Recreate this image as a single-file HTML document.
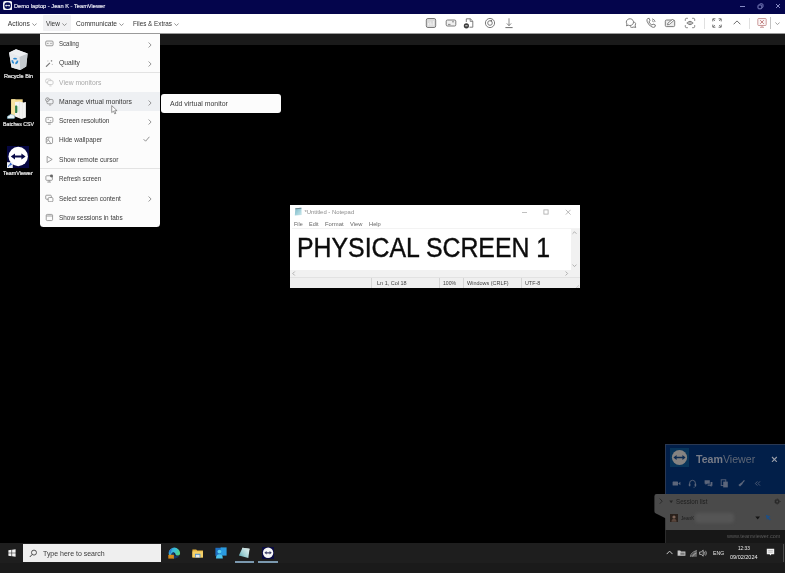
<!DOCTYPE html>
<html>
<head>
<meta charset="utf-8">
<title>TeamViewer</title>
<style>
*{box-sizing:border-box;margin:0;padding:0}
html,body{width:785px;height:573px;overflow:hidden;background:#000;font-family:"Liberation Sans",sans-serif;}
#root{position:absolute;left:-5px;top:-5px;width:795px;height:583px;overflow:hidden;background:#000;filter:blur(0.5px)}
#in{position:absolute;left:5px;top:5px;width:785px;height:573px}
.a{position:absolute;display:block}
.t{position:absolute;white-space:pre;transform-origin:0 50%;display:block}
</style>
</head>
<body>
<div id="root"><div id="in">
<div class="a" style="left:-5px;top:-5px;width:795px;height:19px;background:#04054c;"></div>
<div class="a" style="left:-5px;top:14px;width:795px;height:19.2px;background:#ffffff;"></div>
<div class="a" style="left:-5px;top:32.8px;width:795px;height:0.9px;background:#9a9a9a;"></div>
<div class="a" style="left:-5px;top:33.6px;width:795px;height:11.3px;background:#1a1a1a;"></div>
<svg class="a" style="left:2.7px;top:1.1px;" width="9.3" height="9.3" viewBox="0 0 9.3 9.3"><rect x="0" y="0" width="9.3" height="9.3" rx="2.2" fill="#f4f4f8"/><circle cx="4.65" cy="4.65" r="3.3" fill="#0a0f5a"/><path d="M2 4.65 L3.5 3.5 V4.25 H5.8 V3.5 L7.3 4.65 L5.8 5.8 V5.05 H3.5 V5.8Z" fill="#fff"/></svg>
<div class="t" style="left:14px;top:2.98px;height:6.84px;line-height:6.84px;font-size:5.7px;color:#ececf6;font-weight:400;-webkit-text-stroke:0.15px #ececf6;">Demo laptop - Jean K - TeamViewer</div>
<div class="a" style="left:740.4px;top:5.6px;width:4.6px;height:1px;background:#8589c4;"></div>
<svg class="a" style="left:756px;top:2px;" width="9" height="9" viewBox="0 0 9 9"><rect x="2" y="3" width="3.8" height="3.8" rx="0.8" fill="none" stroke="#7f83c0" stroke-width="1"/><path d="M3.4 2.4 Q3.6 1.8 4.4 1.8 H6 Q7 1.8 7 2.8 V4.6 Q7 5.4 6.2 5.6" fill="none" stroke="#7f83c0" stroke-width="0.9"/></svg>
<svg class="a" style="left:774.3px;top:2.2px;" width="8" height="8" viewBox="0 0 8 8"><path d="M2 2 L6 6 M6 2 L2 6" stroke="#9497d0" stroke-width="0.9" fill="none"/></svg>
<div class="a" style="left:42.8px;top:14.5px;width:27.8px;height:16.8px;background:#f1f1f3;border-radius:1px"></div>
<div class="t" style="left:7.8px;top:19.98px;height:8.04px;line-height:8.04px;font-size:6.7px;color:#333;font-weight:400;">Actions</div>
<svg class="a" style="left:31.700000000000003px;top:22.5px;" width="5" height="3.4" viewBox="0 0 5 3.4"><path d="M0.4 0.5 L2.5 2.6 L4.6 0.5" fill="none" stroke="#777" stroke-width="0.8"/></svg>
<div class="t" style="left:46.2px;top:19.98px;height:8.04px;line-height:8.04px;font-size:6.7px;color:#333;font-weight:400;transform:scaleX(0.9600);">View</div>
<svg class="a" style="left:62.0px;top:22.5px;" width="5" height="3.4" viewBox="0 0 5 3.4"><path d="M0.4 0.5 L2.5 2.6 L4.6 0.5" fill="none" stroke="#777" stroke-width="0.8"/></svg>
<div class="t" style="left:75.8px;top:19.98px;height:8.04px;line-height:8.04px;font-size:6.7px;color:#333;font-weight:400;transform:scaleX(0.9936);">Communicate</div>
<svg class="a" style="left:118.7px;top:22.5px;" width="5" height="3.4" viewBox="0 0 5 3.4"><path d="M0.4 0.5 L2.5 2.6 L4.6 0.5" fill="none" stroke="#777" stroke-width="0.8"/></svg>
<div class="t" style="left:133px;top:19.98px;height:8.04px;line-height:8.04px;font-size:6.7px;color:#333;font-weight:400;transform:scaleX(0.9455);">Files &amp; Extras</div>
<svg class="a" style="left:174.0px;top:22.5px;" width="5" height="3.4" viewBox="0 0 5 3.4"><path d="M0.4 0.5 L2.5 2.6 L4.6 0.5" fill="none" stroke="#777" stroke-width="0.8"/></svg>
<svg class="a" style="left:425.0px;top:17.0px;" width="12" height="12" viewBox="0 0 12 12"><rect x="1.3" y="1.5" width="9.4" height="9" rx="1.6" fill="#dadada" stroke="#6e6e6e" stroke-width="0.9"/><path d="M3.5 8.5V6 M5.2 8.5V4.5 M6.9 8.5V6.5 M8.6 8.5V4" stroke="#f4f4f4" stroke-width="0.8"/></svg>
<svg class="a" style="left:444.8px;top:17.0px;" width="12" height="12" viewBox="0 0 12 12"><rect x="1.2" y="3" width="9.6" height="6" rx="1.2" fill="#f0f0f0" stroke="#6e6e6e" stroke-width="0.9"/><path d="M3 7.4H5.5 M7 4.8H9" stroke="#6e6e6e" stroke-width="0.8"/></svg>
<svg class="a" style="left:463.3px;top:17.0px;" width="12" height="12" viewBox="0 0 12 12"><path d="M3.3 5V1.8H7.4L9.8 4.2V10.2H6.5" fill="none" stroke="#6e6e6e" stroke-width="0.9"/><path d="M7.2 1.8V4.4H9.8" fill="none" stroke="#6e6e6e" stroke-width="0.8"/><circle cx="3.4" cy="8.8" r="2.6" fill="#3c3c3c"/><rect x="2.2" y="8.3" width="2.4" height="1" fill="#ddd"/></svg>
<svg class="a" style="left:484.0px;top:17.0px;" width="12" height="12" viewBox="0 0 12 12"><circle cx="6" cy="6" r="4.6" fill="none" stroke="#6e6e6e" stroke-width="0.9"/><circle cx="6" cy="6" r="2.3" fill="none" stroke="#6e6e6e" stroke-width="0.9"/><path d="M6 3.7L8.2 2.6L7.9 4.8Z" fill="#6e6e6e"/></svg>
<svg class="a" style="left:503.4px;top:17.0px;" width="12" height="12" viewBox="0 0 12 12"><path d="M6 1.3V8.6 M3.8 6.4L6 8.7L8.2 6.4" fill="none" stroke="#6e6e6e" stroke-width="0.8"/><path d="M2.4 10.6H9.6" stroke="#6e6e6e" stroke-width="1"/></svg>
<svg class="a" style="left:624.5px;top:17.0px;" width="12" height="12" viewBox="0 0 12 12"><path d="M1.3 5.2a3.6 3.4 0 1 1 2 3L1.4 8.8L2 7A3.4 3.4 0 0 1 1.3 5.2Z" fill="none" stroke="#6e6e6e" stroke-width="0.9"/><path d="M9 4.6a3.2 3.2 0 0 1 1.2 4.2L10.7 10.5L8.9 10A3.4 3.4 0 0 1 5 9.6" fill="none" stroke="#6e6e6e" stroke-width="0.9"/></svg>
<svg class="a" style="left:644.5px;top:17.0px;" width="12" height="12" viewBox="0 0 12 12"><path d="M2.6 1.6L4.2 1.3L5.1 3.8L3.9 4.7Q4.8 7 7 8.2L8 7L10.4 8L10 9.8Q8.8 10.8 7 10Q3.2 8.2 2 4.2Q1.7 2.4 2.6 1.6Z" fill="none" stroke="#6e6e6e" stroke-width="0.9"/><path d="M7 1.8Q9.6 2.2 10.2 5 M7 3.6Q8.2 4 8.5 5.2" fill="none" stroke="#6e6e6e" stroke-width="0.8"/></svg>
<svg class="a" style="left:664.0px;top:17.0px;" width="12" height="12" viewBox="0 0 12 12"><rect x="1.3" y="3" width="9.4" height="6.6" rx="1.2" fill="#ececec" stroke="#6e6e6e" stroke-width="0.9"/><path d="M3.3 7.8L4 6L8.6 2.4L9.8 3.6L5.4 7.4Z" fill="#fff" stroke="#6e6e6e" stroke-width="0.8"/></svg>
<svg class="a" style="left:683.5px;top:17.0px;" width="12" height="12" viewBox="0 0 12 12"><path d="M1.3 3.8V2.6Q1.3 1.3 2.6 1.3H3.8 M8.2 1.3H9.4Q10.7 1.3 10.7 2.6V3.8 M10.7 8.2V9.4Q10.7 10.7 9.4 10.7H8.2 M3.8 10.7H2.6Q1.3 10.7 1.3 9.4V8.2" fill="none" stroke="#6e6e6e" stroke-width="0.9"/><path d="M2.8 6Q6 2.6 9.2 6Q6 9.4 2.8 6Z" fill="none" stroke="#6e6e6e" stroke-width="0.8"/><circle cx="6" cy="6" r="1.3" fill="none" stroke="#6e6e6e" stroke-width="0.8"/></svg>
<div class="a" style="left:704.2px;top:17.5px;width:0.8px;height:11px;background:#e0e0e0;"></div>
<svg class="a" style="left:711.0px;top:17.0px;" width="12" height="12" viewBox="0 0 12 12"><path d="M1.8 4.4V1.8H4.4 M7.6 1.8H10.2V4.4 M10.2 7.6V10.2H7.6 M4.4 10.2H1.8V7.6" fill="none" stroke="#6e6e6e" stroke-width="1"/><path d="M2 2L4 4 M10 2L8 4 M10 10L8 8 M2 10L4 8" stroke="#6e6e6e" stroke-width="0.8"/></svg>
<svg class="a" style="left:732.5px;top:20.2px;" width="8" height="5" viewBox="0 0 8 5"><path d="M0.6 4.3L4 0.9L7.4 4.3" fill="none" stroke="#6e6e6e" stroke-width="1"/></svg>
<div class="a" style="left:748.8px;top:17.5px;width:0.8px;height:11px;background:#e0e0e0;"></div>
<svg class="a" style="left:756.0px;top:16.8px;" width="12" height="12" viewBox="0 0 12 12"><rect x="1.8" y="1.5" width="8.4" height="7" rx="0.8" fill="#fbf4f4" stroke="#bf8585" stroke-width="0.8"/><path d="M4.2 3.2L7.8 6.8 M7.8 3.2L4.2 6.8" stroke="#a55" stroke-width="0.7"/><path d="M6 8.5V10 M4 10.3H8" stroke="#bf8585" stroke-width="0.8"/></svg>
<div class="a" style="left:769.9px;top:17px;width:0.8px;height:11.6px;background:#c4c4c4;"></div>
<svg class="a" style="left:774.8px;top:22.1px;" width="5" height="3.4" viewBox="0 0 5 3.4"><path d="M0.4 0.5 L2.5 2.6 L4.6 0.5" fill="none" stroke="#888" stroke-width="0.8"/></svg>
<div class="a" style="left:39.6px;top:33.6px;width:120.6px;height:193.5px;background:#fcfcfc;border-radius:0 0 3.5px 3.5px"></div>
<div class="a" style="left:39.6px;top:92.3px;width:120.6px;height:19px;background:#eef0f3;"></div>
<div class="a" style="left:39.6px;top:72.0px;width:120.6px;height:0.8px;background:#e3e3e3;"></div>
<div class="a" style="left:39.6px;top:168.2px;width:120.6px;height:0.8px;background:#e3e3e3;"></div>
<div class="t" style="left:59px;top:39.89px;height:8.22px;line-height:8.22px;font-size:6.85px;color:#3a3a3a;font-weight:400;transform:scaleX(0.8907);">Scaling</div>
<div class="t" style="left:59px;top:59.29px;height:8.22px;line-height:8.22px;font-size:6.85px;color:#3a3a3a;font-weight:400;transform:scaleX(0.9806);">Quality</div>
<div class="t" style="left:59px;top:79.29px;height:8.22px;line-height:8.22px;font-size:6.85px;color:#a9a9a9;font-weight:400;transform:scaleX(0.9869);">View monitors</div>
<div class="t" style="left:59px;top:97.99px;height:8.22px;line-height:8.22px;font-size:6.85px;color:#3a3a3a;font-weight:400;">Manage virtual monitors</div>
<div class="t" style="left:59px;top:116.89px;height:8.22px;line-height:8.22px;font-size:6.85px;color:#3a3a3a;font-weight:400;transform:scaleX(0.9462);">Screen resolution</div>
<div class="t" style="left:59px;top:136.29px;height:8.22px;line-height:8.22px;font-size:6.85px;color:#3a3a3a;font-weight:400;transform:scaleX(0.9562);">Hide wallpaper</div>
<div class="t" style="left:59px;top:155.99px;height:8.22px;line-height:8.22px;font-size:6.85px;color:#3a3a3a;font-weight:400;transform:scaleX(0.9698);">Show remote cursor</div>
<div class="t" style="left:59px;top:174.79px;height:8.22px;line-height:8.22px;font-size:6.85px;color:#3a3a3a;font-weight:400;transform:scaleX(0.9094);">Refresh screen</div>
<div class="t" style="left:59px;top:194.69px;height:8.22px;line-height:8.22px;font-size:6.85px;color:#3a3a3a;font-weight:400;transform:scaleX(0.9388);">Select screen content</div>
<div class="t" style="left:59px;top:213.59px;height:8.22px;line-height:8.22px;font-size:6.85px;color:#3a3a3a;font-weight:400;transform:scaleX(0.9392);">Show sessions in tabs</div>
<svg class="a" style="left:148.2px;top:41.699999999999996px;" width="4" height="6" viewBox="0 0 4 6"><path d="M0.6 0.5 L3.1 3 L0.6 5.5" fill="none" stroke="#8a8a8a" stroke-width="0.9"/></svg>
<svg class="a" style="left:148.2px;top:60.8px;" width="4" height="6" viewBox="0 0 4 6"><path d="M0.6 0.5 L3.1 3 L0.6 5.5" fill="none" stroke="#8a8a8a" stroke-width="0.9"/></svg>
<svg class="a" style="left:148.2px;top:99.60000000000001px;" width="4" height="6" viewBox="0 0 4 6"><path d="M0.6 0.5 L3.1 3 L0.6 5.5" fill="none" stroke="#8a8a8a" stroke-width="0.9"/></svg>
<svg class="a" style="left:148.2px;top:118.7px;" width="4" height="6" viewBox="0 0 4 6"><path d="M0.6 0.5 L3.1 3 L0.6 5.5" fill="none" stroke="#8a8a8a" stroke-width="0.9"/></svg>
<svg class="a" style="left:148.2px;top:195.9px;" width="4" height="6" viewBox="0 0 4 6"><path d="M0.6 0.5 L3.1 3 L0.6 5.5" fill="none" stroke="#8a8a8a" stroke-width="0.9"/></svg>
<svg class="a" style="left:143px;top:136.2px;" width="7" height="6" viewBox="0 0 7 6"><path d="M0.6 3.2 L2.6 5.2 L6.4 0.8" fill="none" stroke="#777" stroke-width="0.8"/></svg>
<svg class="a" style="left:45.1px;top:39.4px;" width="8.8" height="8.8" viewBox="0 0 10 10"><rect x="0.8" y="2.3" width="8.4" height="5.4" rx="1.2" fill="#f2f2f2" stroke="#777" stroke-width="0.8"/><path d="M2.4 5H4 M6 5H7.6" stroke="#777" stroke-width="0.8"/></svg>
<svg class="a" style="left:45.1px;top:58.5px;" width="8.8" height="8.8" viewBox="0 0 10 10"><path d="M1.2 8.8L5.6 4.4" stroke="#777" stroke-width="1.3"/><path d="M7.4 1.2V3 M6.5 2.1H8.3 M3.3 1.8V2.8 M8.3 5.6V6.6" stroke="#777" stroke-width="0.7"/></svg>
<svg class="a" style="left:45.1px;top:78.0px;" width="8.8" height="8.8" viewBox="0 0 10 10"><rect x="0.8" y="1.2" width="6" height="4.4" rx="1.4" fill="none" stroke="#bdbdbd" stroke-width="0.8"/><rect x="3" y="3" width="6.2" height="4.4" rx="1.4" fill="#fcfcfc" stroke="#bdbdbd" stroke-width="0.8"/><path d="M5 9H7.4" stroke="#bdbdbd" stroke-width="0.8"/></svg>
<svg class="a" style="left:45.1px;top:97.3px;" width="8.8" height="8.8" viewBox="0 0 10 10"><rect x="2.2" y="2.8" width="7" height="5" rx="1.4" fill="none" stroke="#777" stroke-width="0.8"/><circle cx="2.8" cy="3" r="2.1" fill="#eef0f3" stroke="#777" stroke-width="0.8"/><path d="M2.8 2V3.2H3.8 M4.6 9.2H7" stroke="#777" stroke-width="0.7" fill="none"/></svg>
<svg class="a" style="left:45.1px;top:116.39999999999999px;" width="8.8" height="8.8" viewBox="0 0 10 10"><rect x="1" y="1.6" width="8" height="5.8" rx="1.4" fill="none" stroke="#777" stroke-width="0.8"/><path d="M3.4 9.2H6.6 M3 3.6H4.4 M5.6 5.4H7" stroke="#777" stroke-width="0.8"/></svg>
<svg class="a" style="left:45.1px;top:135.79999999999998px;" width="8.8" height="8.8" viewBox="0 0 10 10"><rect x="1.4" y="1.4" width="7.2" height="7.2" rx="1.4" fill="none" stroke="#777" stroke-width="0.8"/><path d="M1.6 7L4 4.6L6.6 8.4" fill="none" stroke="#777" stroke-width="0.7"/><circle cx="3" cy="3" r="1.3" fill="#fcfcfc" stroke="#777" stroke-width="0.7"/></svg>
<svg class="a" style="left:45.1px;top:154.9px;" width="8.8" height="8.8" viewBox="0 0 10 10"><path d="M2.4 1.6L8.2 5L2.4 8.6Z" fill="none" stroke="#777" stroke-width="0.8" stroke-linejoin="round"/></svg>
<svg class="a" style="left:45.1px;top:174.2px;" width="8.8" height="8.8" viewBox="0 0 10 10"><rect x="1" y="2" width="7.4" height="5.2" rx="1" fill="none" stroke="#777" stroke-width="0.8"/><path d="M2.6 9.2H6.8 M4.7 7.2V9" stroke="#777" stroke-width="0.8"/><circle cx="7.4" cy="2.4" r="1.7" fill="#666"/></svg>
<svg class="a" style="left:45.1px;top:193.6px;" width="8.8" height="8.8" viewBox="0 0 10 10"><rect x="0.8" y="1.4" width="6.4" height="4.6" rx="1" fill="none" stroke="#777" stroke-width="0.8"/><rect x="3.6" y="4" width="5.4" height="4.8" rx="1.2" fill="#fcfcfc" stroke="#777" stroke-width="0.8"/></svg>
<svg class="a" style="left:45.1px;top:212.9px;" width="8.8" height="8.8" viewBox="0 0 10 10"><rect x="1.4" y="1.6" width="7.2" height="7" rx="1.2" fill="none" stroke="#777" stroke-width="0.8"/><path d="M1.6 3.4H8.4" stroke="#777" stroke-width="0.8"/></svg>
<div class="a" style="left:160.9px;top:94px;width:119.7px;height:18.5px;background:#fcfcfc;border-radius:3px"></div>
<div class="t" style="left:170px;top:99.83px;height:8.34px;line-height:8.34px;font-size:6.95px;color:#3a3a3a;font-weight:400;">Add virtual monitor</div>
<svg class="a" style="left:110.5px;top:105.2px;" width="7.2" height="10.4" viewBox="0 0 7.2 10.4"><path d="M0.7 0.6 V7.6 L2.5 6.1 L3.7 8.9 L4.9 8.4 L3.7 5.7 H6.1 Z" fill="#fdfdfd" stroke="#6e6e6e" stroke-width="0.7" stroke-linejoin="round"/></svg>
<svg class="a" style="left:8px;top:48px;" width="21" height="23" viewBox="0 0 21 23"><path d="M1.1 4.4L8 1.2L19.6 5.4L18.2 18.4L12.3 21.9L3.5 19.4Z" fill="#d9dde0"/><path d="M1.1 4.4L11.6 8.8L12.3 21.9L3.5 19.4Z" fill="#e6e9ec"/><path d="M11.6 8.8L19.6 5.4L18.2 18.4L12.3 21.9Z" fill="#c4c9cd"/><path d="M1.1 4.4L8 1.2L19.6 5.4L11.6 8.8Z" fill="#eef0f2"/><circle cx="6.9" cy="13" r="2.5" fill="none" stroke="#2b8ad2" stroke-width="1.7" stroke-dasharray="3.4 1.6"/></svg>
<div class="t" style="left:3.8px;top:73.38px;height:6.84px;line-height:6.84px;font-size:5.7px;color:#e9e9e9;font-weight:400;transform:scaleX(0.9723);font-weight:400;-webkit-text-stroke:0.22px #e9e9e9;">Recycle Bin</div>
<svg class="a" style="left:6px;top:98px;" width="22" height="22" viewBox="0 0 22 22"><path d="M5.2 1.3H16.7V17.8H5.2Z" fill="#f3d98a"/><path d="M5.2 1.3H9.4V17.8H5.2Z" fill="#f6e2a0"/><path d="M9 4.1L13.5 3.4L17.2 4.6L19.9 4.1V19.6L15.4 20.9L9 18.4Z" fill="#f4f4f2"/><path d="M13.4 3.6V20" stroke="#dcdcd8" stroke-width="0.6"/><path d="M16.4 4.6V20.4" stroke="#e2e2de" stroke-width="0.5"/><rect x="9.1" y="7.6" width="2.1" height="7.4" rx="0.6" fill="#2f7d47"/><rect x="11.2" y="8.4" width="1" height="5.4" fill="#9ed0a8"/><path d="M1.4 20.4Q0.8 17.8 3.2 17.6Q4.2 15.4 6.4 16.8Q9 16.8 8.8 19.2Q8.8 20.6 7.4 20.6H2.4Z" fill="#e9f5fa" stroke="#6fb3c8" stroke-width="0.5"/></svg>
<div class="t" style="left:2.9px;top:121.38px;height:6.84px;line-height:6.84px;font-size:5.7px;color:#e9e9e9;font-weight:400;transform:scaleX(0.9164);font-weight:400;-webkit-text-stroke:0.22px #e9e9e9;">Batches CSV</div>
<div class="a" style="left:7.3px;top:145.9px;width:22.1px;height:22.1px;background:#060742;"></div>
<svg class="a" style="left:7.3px;top:145.9px;" width="22.1" height="22.1" viewBox="0 0 22.1 22.1"><circle cx="11.2" cy="10.5" r="9.7" fill="#fff"/><path d="M3.8 10.5L8 7.6V9.5H14.4V7.6L18.6 10.5L14.4 13.4V11.5H8V13.4Z" fill="#080948"/><rect x="0" y="16.2" width="5.8" height="5.9" fill="#e9edf2"/><path d="M1.4 20.8Q1.6 18.4 4.2 18.2M3 17.2L4.6 18.2L3.2 19.6" stroke="#2458c8" stroke-width="0.9" fill="none"/></svg>
<div class="t" style="left:3.2px;top:170.28px;height:6.84px;line-height:6.84px;font-size:5.7px;color:#e9e9e9;font-weight:400;transform:scaleX(0.9518);font-weight:400;-webkit-text-stroke:0.22px #e9e9e9;">TeamViewer</div>
<div class="a" style="left:290.1px;top:204.9px;width:290.1px;height:83.4px;background:#ffffff;"></div>
<svg class="a" style="left:293.8px;top:207.4px;" width="8.4" height="9" viewBox="0 0 8.4 9"><defs><linearGradient id="npg" x1="0" y1="0" x2="1" y2="1"><stop offset="0" stop-color="#7fb3c0"/><stop offset="0.5" stop-color="#9fd0da"/><stop offset="1" stop-color="#cfe8ec"/></linearGradient></defs><path d="M1.4 1.2L7.4 0.7L7.7 8L0.8 8.4Z" fill="url(#npg)"/><path d="M1.4 1.2L7.4 0.7L7.4 1.7L1.3 2.2Z" fill="#6d8790"/></svg>
<div class="t" style="left:304.4px;top:208.76px;height:7.08px;line-height:7.08px;font-size:5.9px;color:#8e8e8e;font-weight:400;">*Untitled - Notepad</div>
<div class="a" style="left:521.6px;top:211.6px;width:5.2px;height:0.8px;background:#c0c0c0;"></div>
<svg class="a" style="left:543px;top:209.2px;" width="6" height="6" viewBox="0 0 6 6"><rect x="0.9" y="0.9" width="4.2" height="4.2" fill="none" stroke="#a8a8a8" stroke-width="0.8"/></svg>
<svg class="a" style="left:565px;top:209px;" width="6.4" height="6.4" viewBox="0 0 6.4 6.4"><path d="M0.8 0.8L5.6 5.6M5.6 0.8L0.8 5.6" stroke="#a8a8a8" stroke-width="0.8"/></svg>
<div class="t" style="left:293.8px;top:220.72px;height:6.96px;line-height:6.96px;font-size:5.8px;color:#666;font-weight:400;transform:scaleX(0.9204);">File</div>
<div class="t" style="left:308.9px;top:220.72px;height:6.96px;line-height:6.96px;font-size:5.8px;color:#666;font-weight:400;transform:scaleX(0.9500);">Edit</div>
<div class="t" style="left:325px;top:220.72px;height:6.96px;line-height:6.96px;font-size:5.8px;color:#666;font-weight:400;transform:scaleX(1.0131);">Format</div>
<div class="t" style="left:350.2px;top:220.72px;height:6.96px;line-height:6.96px;font-size:5.8px;color:#666;font-weight:400;transform:scaleX(0.9945);">View</div>
<div class="t" style="left:369px;top:220.72px;height:6.96px;line-height:6.96px;font-size:5.8px;color:#666;font-weight:400;transform:scaleX(0.9885);">Help</div>
<div class="a" style="left:292.1px;top:228.3px;width:288.1px;height:0.7px;background:#f3f3f3;"></div>
<div class="t" style="left:297.4px;top:232.1px;height:32.4px;line-height:32.4px;font-size:27px;color:#0c0c0c;font-weight:400;transform:scaleX(0.9204);-webkit-text-stroke:0.4px #0c0c0c;">PHYSICAL SCREEN 1</div>
<div class="a" style="left:570.8px;top:229px;width:9.4px;height:41.4px;background:#f1f1f1;"></div>
<div class="a" style="left:290.1px;top:269.6px;width:290.1px;height:7.4px;background:#f1f1f1;"></div>
<div class="a" style="left:290.1px;top:276.9px;width:290.1px;height:11.400000000000034px;background:#efefef;"></div>
<div class="a" style="left:290.1px;top:276.8px;width:290.1px;height:0.6px;background:#e2e2e2;"></div>
<svg class="a" style="left:572.2px;top:231.2px;" width="5" height="3.4" viewBox="0 0 5 3.4"><path d="M0.5 2.8L2.5 0.8L4.5 2.8" fill="none" stroke="#a0a0a0" stroke-width="0.8"/></svg>
<svg class="a" style="left:572.2px;top:263.8px;" width="5" height="3.4" viewBox="0 0 5 3.4"><path d="M0.5 0.6L2.5 2.6L4.5 0.6" fill="none" stroke="#a0a0a0" stroke-width="0.8"/></svg>
<svg class="a" style="left:292.4px;top:270.8px;" width="3.4" height="5" viewBox="0 0 3.4 5"><path d="M2.8 0.5L0.8 2.5L2.8 4.5" fill="none" stroke="#a0a0a0" stroke-width="0.8"/></svg>
<svg class="a" style="left:565.4px;top:270.8px;" width="3.4" height="5" viewBox="0 0 3.4 5"><path d="M0.6 0.5L2.6 2.5L0.6 4.5" fill="none" stroke="#a0a0a0" stroke-width="0.8"/></svg>
<div class="a" style="left:371.2px;top:278px;width:0.7px;height:9.6px;background:#d4d4d4;"></div>
<div class="a" style="left:439.3px;top:278px;width:0.7px;height:9.6px;background:#d4d4d4;"></div>
<div class="a" style="left:463.2px;top:278px;width:0.7px;height:9.6px;background:#d4d4d4;"></div>
<div class="a" style="left:520.5px;top:278px;width:0.7px;height:9.6px;background:#d4d4d4;"></div>
<div class="t" style="left:377.4px;top:280.34px;height:6.72px;line-height:6.72px;font-size:5.6px;color:#3e3e3e;font-weight:400;transform:scaleX(0.9810);">Ln 1, Col 18</div>
<div class="t" style="left:443.3px;top:280.34px;height:6.72px;line-height:6.72px;font-size:5.6px;color:#3e3e3e;font-weight:400;transform:scaleX(0.9153);">100%</div>
<div class="t" style="left:467.3px;top:280.34px;height:6.72px;line-height:6.72px;font-size:5.6px;color:#3e3e3e;font-weight:400;transform:scaleX(0.9790);">Windows (CRLF)</div>
<div class="t" style="left:524.8px;top:280.34px;height:6.72px;line-height:6.72px;font-size:5.6px;color:#3e3e3e;font-weight:400;transform:scaleX(0.9584);">UTF-8</div>
<svg class="a" style="left:575.4px;top:284px;" width="4.4" height="4.4" viewBox="0 0 4.4 4.4"><path d="M4 1L1 4M4 2.6L2.6 4" stroke="#bbb" stroke-width="0.6"/></svg>
<div class="a" style="left:665.2px;top:443.8px;width:124.79999999999995px;height:50.4px;background:#2a3852;"></div>
<div class="a" style="left:665.9000000000001px;top:444.5px;width:124.79999999999995px;height:49.7px;background:#021f49;"></div>
<div class="a" style="left:665.2px;top:494.1px;width:124.79999999999995px;height:36px;background:#3c3c3c;"></div>
<div class="a" style="left:666.0px;top:494.1px;width:124.79999999999995px;height:36px;background:#4a4a4a;"></div>
<div class="a" style="left:665.2px;top:530.1px;width:124.79999999999995px;height:12.7px;background:#2c2c2c;"></div>
<div class="a" style="left:666.0px;top:530.1px;width:124.79999999999995px;height:12.7px;background:#171717;"></div>
<svg class="a" style="left:653.6px;top:494.1px;" width="12.4" height="25" viewBox="0 0 12.4 25"><path d="M12.4 0H2.6Q0.4 0 0.4 2.2V17.2Q0.4 19 2 19.6L12.4 24.6Z" fill="#4a4a4a"/></svg>
<svg class="a" style="left:658.6px;top:498.4px;" width="4" height="6.4" viewBox="0 0 4 6.4"><path d="M0.7 0.6L3.2 3.2L0.7 5.8" fill="none" stroke="#222" stroke-width="0.8"/></svg>
<div class="a" style="left:669.8px;top:448.4px;width:19px;height:19px;background:#09355a;"></div>
<svg class="a" style="left:669.8px;top:448.4px;" width="19" height="19" viewBox="0 0 19 19"><circle cx="9.5" cy="9.5" r="7.6" fill="#858381"/><path d="M3.4 9.5L6.6 7V8.8H12.4V7L15.6 9.5L12.4 12V10.2H6.6V12Z" fill="#0e2c52"/></svg>
<div class="t" style="left:696.4px;top:453.66px;height:12.48px;line-height:12.48px;font-size:10.4px;color:#5f6776;font-weight:400;transform:scaleX(1.0215);"><b style="color:#787c87">Team</b>Viewer</div>
<svg class="a" style="left:771.4px;top:455.7px;" width="6.8" height="6.8" viewBox="0 0 6.8 6.8"><path d="M1 1L5.8 5.8M5.8 1L1 5.8" stroke="#9ca0ab" stroke-width="1.1"/></svg>
<svg class="a" style="left:671.5px;top:478.9px;" width="9" height="9" viewBox="0 0 9 9"><rect x="0.6" y="2.4" width="5.4" height="4.2" rx="0.6" fill="#5c667b"/><path d="M6.2 4.5L8.4 2.8V6.2Z" fill="#5c667b"/></svg>
<svg class="a" style="left:687.5px;top:478.9px;" width="9" height="9" viewBox="0 0 9 9"><path d="M1.6 5.6V4.2A2.9 2.9 0 0 1 7.4 4.2V5.6" fill="none" stroke="#5c667b" stroke-width="0.9"/><rect x="0.8" y="4.6" width="1.6" height="2.6" rx="0.5" fill="#5c667b"/><rect x="6.6" y="4.6" width="1.6" height="2.6" rx="0.5" fill="#5c667b"/><path d="M7.4 7V7.6Q7.4 8.3 5.4 8.3" fill="none" stroke="#5c667b" stroke-width="0.6"/></svg>
<svg class="a" style="left:703.9px;top:478.9px;" width="9" height="9" viewBox="0 0 9 9"><path d="M0.6 1.2H5.8V4.8H3L1.6 6V4.8H0.6Z" fill="#5c667b"/><path d="M3.6 5.6H6.6V3H8.4V6.8H7.4V8L6 6.8H3.6Z" fill="#5c667b"/></svg>
<svg class="a" style="left:720.3px;top:478.9px;" width="9" height="9" viewBox="0 0 9 9"><rect x="1.2" y="0.8" width="4.6" height="5.8" fill="none" stroke="#5c667b" stroke-width="0.9"/><rect x="3.2" y="2.6" width="4.6" height="5.8" fill="#5c667b"/></svg>
<svg class="a" style="left:736.9px;top:478.9px;" width="9" height="9" viewBox="0 0 9 9"><path d="M7.4 1.4L4.8 4.4" stroke="#5c667b" stroke-width="1.2"/><path d="M4.4 3.4L5.8 4.8L3 7.6L1.4 6Z" fill="#5c667b"/></svg>
<svg class="a" style="left:752.9px;top:478.9px;" width="9" height="9" viewBox="0 0 9 9"><path d="M4.4 2.4L2.4 4.5L4.4 6.6M7 2.4L5 4.5L7 6.6" fill="none" stroke="#5c667b" stroke-width="0.8"/></svg>
<svg class="a" style="left:668.6px;top:499.6px;" width="4.4" height="3.6" viewBox="0 0 4.4 3.6"><path d="M0.3 0.4H4.1L2.2 3.3Z" fill="#262626"/></svg>
<div class="t" style="left:675.8px;top:497.72px;height:7.56px;line-height:7.56px;font-size:6.3px;color:#1e1e1e;font-weight:400;transform:scaleX(0.9856);">Session list</div>
<svg class="a" style="left:773.6px;top:497.8px;" width="7" height="7" viewBox="0 0 7 7"><circle cx="3.2" cy="3.5" r="1.6" fill="none" stroke="#2a2a2a" stroke-width="1.4"/><circle cx="3.2" cy="3.5" r="2.5" fill="none" stroke="#2a2a2a" stroke-width="0.7" stroke-dasharray="0.9 0.7"/><path d="M5.8 3L6.9 3L6.35 3.9Z" fill="#2a2a2a"/></svg>
<div class="a" style="left:669.8px;top:513.8px;width:7.8px;height:7.8px;background:#2a211c;"></div>
<svg class="a" style="left:669.8px;top:513.8px;" width="7.8" height="7.8" viewBox="0 0 7.8 7.8"><circle cx="4" cy="3" r="1.6" fill="#7d6458"/><path d="M1.4 7.8Q1.6 4.8 4 4.8Q6.4 4.8 6.6 7.8Z" fill="#5a463c"/></svg>
<div class="t" style="left:680.6px;top:515.16px;height:6.48px;line-height:6.48px;font-size:5.4px;color:#1c1c1c;font-weight:400;transform:scaleX(0.8760);">JeanK</div>
<div class="a" style="left:694.5px;top:512.8px;width:39px;height:10px;background:#555;filter:blur(1.6px);border-radius:3px"></div>
<svg class="a" style="left:754.8px;top:516px;" width="5.4" height="4" viewBox="0 0 5.4 4"><path d="M0.3 0.4H5.1L2.7 3.6Z" fill="#151515"/></svg>
<svg class="a" style="left:764.6px;top:514.2px;" width="7" height="7" viewBox="0 0 7 7"><path d="M0.8 0.8L5.6 2.6L3.6 3.4L5.8 5.6L5 6.4L2.8 4.2L2 6Z" fill="#1d4f86"/></svg>
<div class="t" style="left:727.4px;top:533.26px;height:6.48px;line-height:6.48px;font-size:5.4px;color:#5a5a5a;font-weight:400;transform:scaleX(1.0303);">www.teamviewer.com</div>
<div class="a" style="left:-5px;top:542.8px;width:795px;height:35.2px;background:#1e1e1e;"></div>
<div class="a" style="left:-5px;top:562.6px;width:795px;height:15.4px;background:#1a1a1a;"></div>
<svg class="a" style="left:7.6px;top:549.2px;" width="8" height="8" viewBox="0 0 8 8"><path d="M0.4 1.2L3.5 0.8V3.7H0.4Z M4.1 0.7L7.6 0.2V3.7H4.1Z M0.4 4.3H3.5V7.2L0.4 6.8Z M4.1 4.3H7.6V7.8L4.1 7.3Z" fill="#f2f2f2"/></svg>
<div class="a" style="left:23.3px;top:543.5px;width:138.2px;height:18.9px;background:#efefef;"></div>
<svg class="a" style="left:29px;top:548.5px;" width="8.4" height="9" viewBox="0 0 8.4 9"><circle cx="5" cy="3.6" r="2.5" fill="none" stroke="#444" stroke-width="0.9"/><path d="M3.2 5.4L0.8 8" stroke="#444" stroke-width="1"/></svg>
<div class="t" style="left:42.6px;top:549.56px;height:8.28px;line-height:8.28px;font-size:6.9px;color:#3a3a3a;font-weight:400;transform:scaleX(1.0130);">Type here to search</div>
<svg class="a" style="left:168.2px;top:547px;" width="12.6" height="12" viewBox="0 0 12.6 12"><defs><linearGradient id="eg" x1="0" y1="0.2" x2="1" y2="0.6"><stop offset="0" stop-color="#2f9ee0"/><stop offset="0.5" stop-color="#3cc0d8"/><stop offset="1" stop-color="#52d676"/></linearGradient></defs><path d="M6.3 0.6A5.7 5.7 0 0 1 12.1 6Q12.1 8.6 9.4 8.6Q7.4 8.6 7.4 7Q7.4 5.4 5.8 5.4Q3.4 5.4 3.4 8Q3.4 10.4 6.6 11.5A5.7 5.7 0 0 1 0.6 6A5.7 5.7 0 0 1 6.3 0.6Z" fill="url(#eg)"/><path d="M3.4 8Q3.4 10.8 7.2 11.4Q10 11.2 11.4 8.6Q9.2 9.8 7.4 8.8Q5.6 7.8 6.2 5.4Q3.4 5 3.4 8Z" fill="#13366e"/><path d="M0.8 4.6Q2 1.8 5 1.2Q2.6 3 2.6 6.4Q1.4 6.4 0.8 4.6Z" fill="#2a7fd0"/><rect x="0.3" y="7.8" width="5.6" height="3.8" fill="#d58a1c"/></svg>
<svg class="a" style="left:192.2px;top:547.6px;" width="11.4" height="10" viewBox="0 0 11.4 10"><path d="M0.4 1.4H4.2L5.2 2.4H11V9.4H0.4Z" fill="#e9b53c"/><path d="M0.4 3.4H11V9.4H0.4Z" fill="#f5d169"/><rect x="3" y="5.8" width="5.4" height="3.6" fill="#4d8fc8"/><rect x="3.8" y="6.8" width="3.8" height="2.6" fill="#e8e8e8"/></svg>
<svg class="a" style="left:215.4px;top:547.4px;" width="11.8" height="11.8" viewBox="0 0 11.8 11.8"><rect x="0.4" y="0.8" width="6.4" height="8" fill="#1e6fc0"/><rect x="5.6" y="0.4" width="6" height="8.2" fill="#2a9be0"/><circle cx="4.4" cy="4.6" r="1.9" fill="#58d0f0"/><path d="M1 11.4Q1 7.2 4.4 7.2Q7.8 7.2 7.8 11.4Z" fill="#4cc4ec"/></svg>
<svg class="a" style="left:238px;top:547px;" width="13" height="12" viewBox="0 0 13 12"><defs><linearGradient id="tn" x1="0" y1="1" x2="1" y2="0.2"><stop offset="0" stop-color="#4f9ea8"/><stop offset="0.45" stop-color="#9fd0d4"/><stop offset="1" stop-color="#e2f1f0"/></linearGradient></defs><path d="M4.5 0.8L11.6 1.7L10.3 11.1L0.9 8.4Z" fill="url(#tn)"/><path d="M4.5 0.8L11.6 1.7L11.4 2.8L4 1.9Z" fill="#c8dcdc"/></svg>
<div class="a" style="left:234.8px;top:561.3px;width:19.6px;height:1.6px;background:#7b98ae;"></div>
<div class="a" style="left:262px;top:546.9px;width:12.2px;height:11.7px;background:#0a0b40;"></div>
<svg class="a" style="left:262px;top:546.9px;" width="12.2" height="11.7" viewBox="0 0 12.2 11.7"><circle cx="6.1" cy="5.8" r="5.2" fill="#f6f6f6"/><path d="M2.4 5.8L4.6 4.1V5.2H7.6V4.1L9.8 5.8L7.6 7.5V6.4H4.6V7.5Z" fill="#3a3c66"/></svg>
<div class="a" style="left:258.2px;top:561.3px;width:19.8px;height:1.6px;background:#7b98ae;"></div>
<svg class="a" style="left:665.6px;top:550.4px;" width="7.2" height="4.8" viewBox="0 0 7.2 4.8"><path d="M0.7 4.1L3.6 1.1L6.5 4.1" fill="none" stroke="#c8c8c8" stroke-width="1"/></svg>
<svg class="a" style="left:676.6px;top:549.2px;" width="9" height="8" viewBox="0 0 9 8"><path d="M0.6 1.4H3.2L4 2.4H8.4V6.8H0.6Z" fill="#c8c8c8"/><rect x="3.4" y="3.6" width="4.2" height="2.2" fill="#777"/></svg>
<svg class="a" style="left:688.6px;top:548.6px;" width="8.6" height="8.6" viewBox="0 0 8.6 8.6"><path d="M0.8 7.8L7.8 0.8V7.8Z" fill="#6a6a6a"/><path d="M1.4 7.6Q2 3.2 7.6 1.6 M3.6 7.6Q4 5 7.6 4" fill="none" stroke="#aaa" stroke-width="0.8"/></svg>
<svg class="a" style="left:698.8px;top:548.8px;" width="9" height="8.4" viewBox="0 0 9 8.4"><path d="M0.6 3H2.2L4.2 1.2V7.2L2.2 5.4H0.6Z" fill="none" stroke="#c8c8c8" stroke-width="0.8"/><path d="M5.4 2.8Q6.4 4.2 5.4 5.6 M6.6 1.8Q8.2 4.2 6.6 6.6" fill="none" stroke="#c8c8c8" stroke-width="0.7"/></svg>
<div class="t" style="left:712.6px;top:549.96px;height:6.48px;line-height:6.48px;font-size:5.4px;color:#e6e6e6;font-weight:400;transform:scaleX(0.9583);">ENG</div>
<div class="t" style="left:737.8px;top:545.2px;height:6.6px;line-height:6.6px;font-size:5.5px;color:#f0f0f0;font-weight:400;transform:scaleX(0.8572);">12:33</div>
<div class="t" style="left:730px;top:554.3px;height:6.6px;line-height:6.6px;font-size:5.5px;color:#f0f0f0;font-weight:400;">09/02/2024</div>
<svg class="a" style="left:765.6px;top:548.4px;" width="9" height="9" viewBox="0 0 9 9"><path d="M0.8 0.8H8.2V6.2H5.4L4.5 7.6L3.6 6.2H0.8Z" fill="#f0f0f0"/><path d="M2.2 2.6H6.8M2.2 4.2H6.8" stroke="#999" stroke-width="0.6"/></svg>
<div class="a" style="left:783.3px;top:544px;width:0.8px;height:18px;background:#4c4c4c;"></div>
</div></div>
</body>
</html>
